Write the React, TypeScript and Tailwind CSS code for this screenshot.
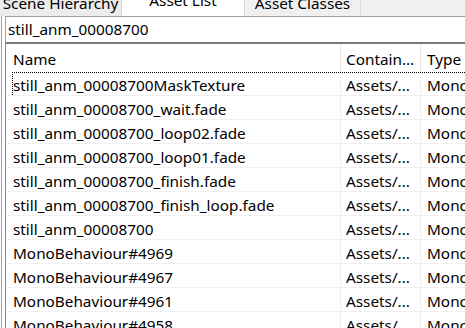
const rows = [
  'still_anm_00008700MaskTexture',
  'still_anm_00008700_wait.fade',
  'still_anm_00008700_loop02.fade',
  'still_anm_00008700_loop01.fade',
  'still_anm_00008700_finish.fade',
  'still_anm_00008700_finish_loop.fade',
  'still_anm_00008700',
  'MonoBehaviour#4969',
  'MonoBehaviour#4967',
  'MonoBehaviour#4961',
  'MonoBehaviour#4958',
]

function Tab({ label, className, lift }: { label: string; className: string; lift: string }) {
  return (
    <div className={`h-[16px] shrink-0 overflow-hidden text-center whitespace-nowrap ${className}`}>
      <div className={`leading-[16px] ${lift}`}>{label}</div>
    </div>
  )
}

export default function App() {
  return (
    <div className="w-[465px] h-[328px] overflow-hidden bg-white text-[15.3px] text-black font-['Noto_Sans',sans-serif]">
      <div className="flex h-[16px] bg-[#f0f0f0]">
        <Tab label="Scene Hierarchy" className="w-[122px] border-r border-[#d9d9d9] bg-[#ececec]" lift="-mt-[5px]" />
        <Tab label="Asset List" className="w-[122px] bg-white" lift="-mt-[8px]" />
        <Tab label="Asset Classes" className="w-[117px] border-x border-[#d9d9d9] bg-[#f0f0f0]" lift="-mt-[5px]" />
        <div className="flex-1" />
      </div>

      <div className="ml-[1px] h-[312px] border-l border-[#a0a0a0] pl-[3px]">
        {/* search box */}
        <div className="h-[28px] border-l border-t border-[#a0a0a0] border-b-2 border-b-[#7a7a7a] pl-[2px] leading-[25px] whitespace-nowrap">
          still_anm_00008700
        </div>

        {/* list view */}
        <div className="border-l border-[#828790]">
          <div className="flex h-[28px] leading-[30px] whitespace-nowrap">
            <div className="w-[335px] shrink-0 border-r border-[#e5e5e5] pl-[7px]">Name</div>
            <div className="w-[80px] shrink-0 border-r border-[#e5e5e5] pl-[5px]">Contain...</div>
            <div className="min-w-0 flex-1 overflow-hidden pl-[6px]">Type</div>
          </div>

          {rows.map((name, i) => (
            <div key={name} className="relative flex h-[24px] border-b border-[#f0f0f0] leading-[27px] whitespace-nowrap">
              {i === 0 && (
                <div className="absolute left-[6px] top-0 right-0 bottom-0 border-t border-l border-dotted border-black" />
              )}
              <div className="w-[335px] shrink-0 border-r border-[#f0f0f0] pl-[7px]">{name}</div>
              <div className="w-[80px] shrink-0 border-r border-[#f0f0f0] pl-[5px]">Assets/...</div>
              <div className="min-w-0 flex-1 overflow-hidden pl-[6px]">MonoBehaviour</div>
            </div>
          ))}
        </div>
      </div>
    </div>
  )
}
